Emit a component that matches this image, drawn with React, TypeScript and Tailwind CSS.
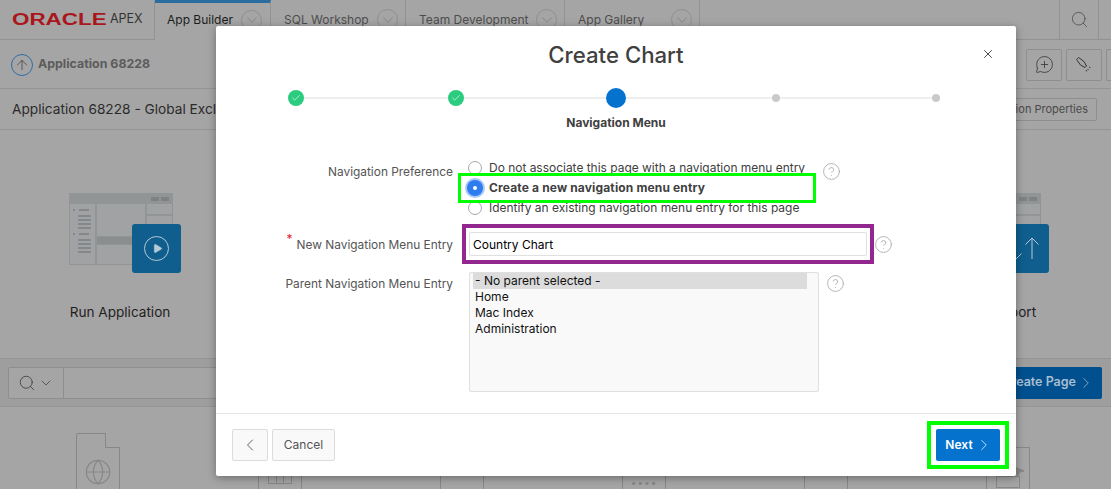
import {
  ArrowUp,
  Check,
  ChevronDown,
  ChevronLeft,
  ChevronRight,
  CircleHelp,
  Globe,
  MessageCirclePlus,
  MousePointer2,
  Play,
  Search,
  X,
} from "lucide-react";
import type { ReactNode } from "react";

const font = "font-['Inter','Liberation_Sans',sans-serif]";

function Tab({ label, width }: { label: string; width: string }) {
  return (
    <div className={`flex h-10 items-center justify-between border-r border-[#929292] border-b pl-[13px] pr-[7px] ${width}`}>
      <span className="text-[12px] text-[#4d4d4d]">{label}</span>
      <span className="flex h-[21px] w-[21px] items-center justify-center rounded-full border border-[#8f8f8f]">
        <ChevronDown className="h-[18px] w-[18px] text-[#7b7b7b]" strokeWidth={1} />
      </span>
    </div>
  );
}

function Header() {
  return (
    <header className="flex h-10 shrink-0 bg-[#a5a5a5]">
      <div className="flex w-[155px] items-center border-r border-b border-[#929292] pl-3">
        <span className="w-[66px] shrink-0 origin-left scale-x-[1.4] whitespace-nowrap font-['Liberation_Sans'] text-[16px] font-bold leading-none text-[#a9161c]">
          ORACLE
        </span>
        <span className="ml-[32px] text-[12.5px] text-[#333]">APEX</span>
      </div>
      <div className="flex h-10 w-[116px] items-center justify-between border-r border-[#929292] border-t-[3px] border-t-[#2a6ea1] pl-3 pr-[8px] pb-[3px]">
        <span className="text-[12px] text-[#1c1c1c]">App Builder</span>
        <span className="flex h-[21px] w-[21px] items-center justify-center rounded-full border border-[#8f8f8f]">
          <ChevronDown className="h-[18px] w-[18px] text-[#7b7b7b]" strokeWidth={1} />
        </span>
      </div>
      <Tab label="SQL Workshop" width="w-[135px]" />
      <Tab label="Team Development" width="w-[159px]" />
      <Tab label="App Gallery" width="w-[135px]" />
      <div className="flex-1 border-b border-[#929292]" />
      <div className="flex h-10 w-[40px] items-center justify-center border-x border-b border-[#929292]">
        <Search className="h-[19px] w-[19px] text-[#4a4a4a]" strokeWidth={1} />
      </div>
      <div className="w-3 border-b border-[#929292]" />
    </header>
  );
}

function FlashlightIcon() {
  return (
    <svg width="18" height="18" viewBox="0 0 18 18" fill="none" stroke="#333" strokeWidth="1">
      <path d="M1.5 3.5L3.5 1.5L9 5.5L11.5 10L10 11.5L5.5 9Z" />
      <path d="M12.5 13L14 14.5M14 11L16 12M11 14L12 16" strokeDasharray="1.5 1" />
    </svg>
  );
}

function SubBar() {
  return (
    <div className="flex h-[49px] shrink-0 items-center border-b border-[#949494] bg-[#a5a5a5] pl-[11px] pt-[1px]">
      <span className="flex h-[22px] w-[22px] items-center justify-center rounded-full border border-[#2f6ea3]">
        <ArrowUp className="h-4 w-4 text-[#333]" strokeWidth={1} />
      </span>
      <span className="ml-[5px] text-[12.4px] font-bold text-[#5c5c5c]">Application 68228</span>
      <div className="ml-auto flex gap-[4px]">
        <span className="flex h-8 w-[36px] items-center justify-center rounded-[2px] border border-[#8e8e8e]">
          <MessageCirclePlus className="h-[19px] w-[19px] text-[#333]" strokeWidth={1} />
        </span>
        <span className="flex h-8 w-[36px] items-center justify-center rounded-[2px] border border-[#8e8e8e]">
          <FlashlightIcon />
        </span>
        <span className="h-8 w-[5px] rounded-l-[2px] border-y border-l border-[#8e8e8e]" />
      </div>
    </div>
  );
}

function TitleBar() {
  return (
    <div className="flex h-[41px] shrink-0 items-center justify-between border-b border-[#949494] bg-[#a5a5a5] pl-3 pr-[14px]">
      <span className="text-[13.7px] text-[#2b2b2b]">Application 68228 - Global Exclusions</span>
      <span className="flex h-[23px] items-center rounded-[2px] border border-[#8e8e8e] px-2 text-[11px] text-[#4a4a4a]">
        Application Properties
      </span>
    </div>
  );
}

function Illustration() {
  return (
    <svg width="104" height="72" viewBox="0 0 104 72" fill="none" className="block">
      <rect x="0.5" y="0.5" width="103" height="71" fill="#a0a2a3" stroke="#929596" />
      <rect x="0" y="0" width="104" height="11" fill="#929596" />
      <rect x="82" y="4" width="8" height="4" fill="#7f8283" />
      <rect x="92" y="4" width="8" height="4" fill="#7f8283" />
      <path d="M27 11V72M77 11V46M77 22H104M27 44H104M27 51H104" stroke="#929596" strokeWidth="2" />
      <rect x="28" y="44" width="76" height="7" fill="#8b8e8f" />
      <path d="M4 17H6M10 17H20M9 23H22M9 27H22M9 31H22M9 35H22M4 41H6M10 41H20M9 47H22M9 51H22M9 55H22M9 59H22" stroke="#85888a" strokeWidth="2" />
    </svg>
  );
}

function Tile({ label, children }: { label: string; children: ReactNode }) {
  return (
    <div className="flex w-[220px] flex-col items-center">
      <div className="relative ml-[10px] mt-[63px] h-[80px] w-[112px]">
        <Illustration />
        <span className="absolute left-[63px] top-[31px] flex h-[49px] w-[49px] items-center justify-center rounded-[3px] bg-[#0f5e8e] text-[#b5c9d6]">
          {children}
        </span>
      </div>
      <span className="mt-[29px] text-[13.6px] text-[#1f1f1f]">{label}</span>
    </div>
  );
}

function FileCard({ children }: { children?: ReactNode }) {
  return (
    <div className="flex justify-center pt-[26px]">
      <div className="relative h-[70px] w-[44px] rounded-[2px] border border-[#878787]">
        <span className="absolute -right-[1px] -top-[1px] h-[15px] w-[15px] border-b border-l border-[#878787] bg-[#a5a5a5]" />
        <div className="flex justify-center pt-[24px] text-[#878787]">{children}</div>
      </div>
    </div>
  );
}

function TransferArrows() {
  return (
    <svg width="34" height="24" viewBox="0 0 34 24" fill="none" stroke="currentColor" strokeWidth="1" className="ml-[-1px]">
      <path d="M8 2V23M1.5 16.5L8 23L14.5 16.5" />
      <path d="M25 1V22M18.5 7.5L25 1L31.5 7.5" />
    </svg>
  );
}

function Background() {
  return (
    <div className="flex h-full flex-col">
      <Header />
      <SubBar />
      <TitleBar />
      <section className="flex h-[228px] shrink-0 justify-between bg-[#a5a5a5] pl-[10px] pr-[13px]">
        <Tile label="Run Application">
          <span className="flex h-[25px] w-[25px] items-center justify-center rounded-full border border-[#b5c9d6]">
            <Play className="ml-[2px] h-[11px] w-[11px] fill-[#b5c9d6]" strokeWidth={1} />
          </span>
        </Tile>
        <Tile label="Export / Import">
          <TransferArrows />
        </Tile>
      </section>
      <div className="flex h-[49px] shrink-0 items-center border-y border-[#949494] bg-[#9e9e9e] pl-2 pr-[9px]">
        <div className="flex h-8 flex-1 rounded-[2px] border border-[#8e8e8e] bg-[#a5a5a5]">
          <div className="flex w-[55px] items-center justify-center gap-[2px] border-r border-[#8e8e8e]">
            <Search className="h-[18px] w-[18px] text-[#333]" strokeWidth={1} />
            <ChevronDown className="h-4 w-4 text-[#333]" strokeWidth={1} />
          </div>
        </div>
        <div className="ml-2 flex h-8 w-[120px] items-center justify-end gap-[1px] rounded-[2px] bg-[#00508f] pr-[7px] text-[12.5px] font-semibold text-[#a9bed0]">
          Create Page
          <ChevronRight className="h-[18px] w-[18px]" strokeWidth={1} />
        </div>
      </div>
      <div className="grid min-h-0 flex-1 grid-cols-6 overflow-hidden bg-[#a5a5a5] pl-[7px] pr-[12px]">
        <FileCard><Globe className="h-7 w-7" strokeWidth={1} /></FileCard>
        <FileCard>
          <div className="mt-[16px] flex h-[10px] w-6 border border-[#878787]">
            <span className="flex-1 border-r border-[#878787]" />
            <span className="flex-1 border-r border-[#878787]" />
            <span className="flex-1" />
          </div>
        </FileCard>
        <FileCard />
        <FileCard>
          <span className="mt-[19px] text-[10px] leading-none tracking-[1px]">••••</span>
        </FileCard>
        <FileCard />
        <FileCard>
          <div className="relative mt-[18px] h-[12px] w-6 border border-[#878787]">
            <MousePointer2 className="absolute -right-[7px] -top-[13px] h-[15px] w-[15px] fill-[#878787]" strokeWidth={1} />
          </div>
        </FileCard>
      </div>
    </div>
  );
}

function Step({ state }: { state: "done" | "current" | "todo" }) {
  return (
    <div className="z-10 flex w-5 justify-center">
      {state === "done" && (
        <span className="flex h-4 w-4 items-center justify-center rounded-full bg-[#2bcc7f] text-white">
          <Check className="h-[10px] w-[10px]" strokeWidth={1.5} />
        </span>
      )}
      {state === "current" && <span className="h-5 w-5 rounded-full bg-[#0572ce]" />}
      {state === "todo" && <span className="h-2 w-2 rounded-full bg-[#c9c9c9]" />}
    </div>
  );
}

function Radio({ label, checked }: { label: string; checked?: boolean }) {
  return (
    <div className="flex h-5 items-center">
      {checked ? (
        <span className="ml-[-1px] mr-[6px] flex h-[16px] w-[16px] items-center justify-center rounded-full bg-[#2f7bf0] shadow-[0_0_0_2px_#a9c9f7]">
          <span className="h-1 w-1 rounded-full bg-white" />
        </span>
      ) : (
        <span className="mr-[7px] h-[14px] w-[14px] rounded-full border border-[#a8a8a8] bg-white" />
      )}
      <span className={checked ? "text-[12px] font-bold tracking-[0.15px] text-[#404040]" : "text-[11.96px] text-[#404040]"}>{label}</span>
    </div>
  );
}

function Help() {
  return <CircleHelp className="h-[19px] w-[19px] shrink-0 text-[#a3a3a3]" strokeWidth={1} />;
}

function Modal() {
  return (
    <div className="absolute left-[216px] top-[26px] flex h-[450px] w-[800px] flex-col rounded-[2px] bg-white shadow-[0_2px_8px_rgba(0,0,0,0.35)]">
      <div className="relative flex h-[58px] items-center justify-center">
        <h1 className="text-[22.2px] font-medium text-[#404040]">Create Chart</h1>
        <X className="absolute right-[21px] top-[21px] h-[14px] w-[14px] text-[#333]" strokeWidth={1.5} />
      </div>

      <div className="relative flex h-7 items-center justify-between px-[70px]">
        <span className="absolute left-[80px] right-[80px] top-[13px] h-[2px] bg-[#eeeeee]" />
        <Step state="done" />
        <Step state="done" />
        <Step state="current" />
        <Step state="todo" />
        <Step state="todo" />
      </div>
      <p className="mt-[3px] text-center text-[12px] font-bold leading-4 text-[#404040]">Navigation Menu</p>

      <div className="mt-[27px] grid grid-cols-[237px_1fr] gap-x-[15px] pr-[20px]">
        <div className="pt-[6px] text-right text-[11.9px] leading-4 text-[#555]">Navigation Preference</div>
        <div className="relative flex items-start">
          <div>
            <Radio label="Do not associate this page with a navigation menu entry" />
            <Radio label="Create a new navigation menu entry" checked />
            <Radio label="Identify an existing navigation menu entry for this page" />
          </div>
          <span className="absolute left-[-10px] top-[15px] h-[30px] w-[358px] border-[3px] border-[#00ff00]" />
          <span className="ml-[17px] mt-[4px]"><Help /></span>
        </div>

        <div className="mt-[6px] flex items-center justify-end pt-[2px] text-[11.9px] leading-4 text-[#555]">
          <span className="relative mr-1 -mt-[12px] text-[#e0202a]">*</span>
          <span>New Navigation Menu Entry</span>
        </div>
        <div className="mt-[6px] flex items-center">
          <div className="ml-[-6px] w-[412px] border-4 border-[#92278f] px-[3px] py-1">
            <div className="flex h-6 items-center rounded-[2px] border border-[#e0e0e0] bg-white pl-[3px] pt-[1px] text-[12px] text-black">
              Country Chart
            </div>
          </div>
          <Help />
        </div>

        <div className="mt-[12px] text-right text-[11.9px] leading-4 text-[#555]">Parent Navigation Menu Entry</div>
        <div className="mt-[8px] flex items-start">
          <div className="ml-[1px] h-[120px] w-[350px] rounded-[2px] border border-[#dfdfdf] bg-[#f9f9f9]">
            <div className="mr-[11px] ml-[3px] text-[12px] leading-4 text-[#111]">
              <div className="bg-[#dcdcdc] pl-[2px]">- No parent selected -</div>
              <div className="pl-[2px]">Home</div>
              <div className="pl-[2px]">Mac Index</div>
              <div className="pl-[2px]">Administration</div>
            </div>
          </div>
          <span className="ml-[7px] mt-[2px]"><Help /></span>
        </div>
      </div>

      <div className="mt-auto flex h-[63px] items-start justify-between border-t border-[#e4e4e4] pl-4 pr-[7px] pt-[7px]">
        <div className="mt-[8px] flex gap-1">
          <span className="flex h-8 w-9 items-center justify-center rounded-[2px] border border-[#dcdcdc] bg-[#f9f9f9]">
            <ChevronLeft className="h-5 w-5 text-[#444]" strokeWidth={1} />
          </span>
          <span className="flex h-8 w-[63px] items-center justify-center rounded-[2px] border border-[#dcdcdc] bg-[#f9f9f9] text-[12px] text-[#555]">
            Cancel
          </span>
        </div>
        <div className="border-4 border-[#00ff00] bg-white px-[5px] py-1">
          <span className="flex h-8 w-[64px] items-center justify-center gap-[2px] rounded-[2px] bg-[#0572ce] pl-[2px] text-[12px] font-semibold tracking-[0.1px] text-white">
            Next
            <ChevronRight className="h-[18px] w-[18px]" strokeWidth={1} />
          </span>
        </div>
      </div>
    </div>
  );
}

export default function App() {
  return (
    <div className={`relative h-[489px] w-[1111px] overflow-hidden bg-[#a5a5a5] ${font}`}>
      <Background />
      <Modal />
    </div>
  );
}
